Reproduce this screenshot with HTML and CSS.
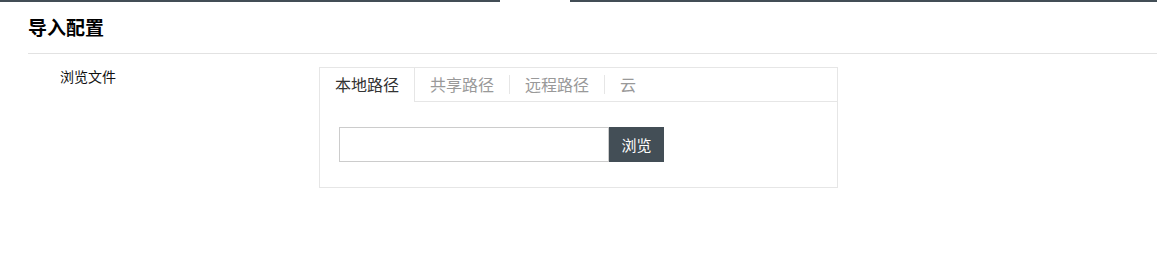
FILE: index.html
```html
<!DOCTYPE html>
<html lang="zh">
<head>
<meta charset="utf-8">
<title>导入配置</title>
<link rel="stylesheet" href="styles.css">
</head>
<body>
<div class="topbar"><span class="seg seg-a"></span><span class="seg-gap"></span><span class="seg seg-b"></span></div>
<div class="header"><h1 class="title">导入配置</h1></div>
<div class="form-row">
  <div class="label">浏览文件</div>
  <div class="panel">
    <div class="tabs">
      <div class="tab active">本地路径</div>
      <div class="tab">共享路径</div>
      <span class="sep"></span>
      <div class="tab">远程路径</div>
      <span class="sep"></span>
      <div class="tab">云</div>
    </div>
    <div class="panel-body">
      <input class="path-input" type="text">
      <button class="browse-btn" type="button">浏览</button>
    </div>
  </div>
</div>
</body>
</html>
```
FILE: styles.css
```css
html, body {
  margin: 0;
  padding: 0;
  background: #fff;
  font-family: "Noto Sans CJK SC", "Noto Sans", sans-serif;
  color: #222;
}
.topbar {
  display: flex;
  height: 2px;
}
.seg { background: #434e56; }
.seg-a { width: 500px; }
.seg-gap { width: 70px; }
.seg-b { flex: 1; }

.header {
  margin-left: 28px;
  padding: 13px 0 14px;
  border-bottom: 1px solid #e2e2e2;
}
.title {
  margin: 0;
  font-size: 19px;
  line-height: 24px;
  font-weight: bold;
  color: #000;
}
.form-row {
  display: flex;
  margin-top: 13px;
  padding-left: 60px;
}
.label {
  width: 259px;
  font-size: 14px;
  line-height: 19px;
  color: #111;
}
.panel {
  width: 517px;
  border: 1px solid #e6e6e6;
}
.tabs {
  display: flex;
  align-items: center;
  height: 33px;
  border-bottom: 1px solid #e6e6e6;
}
.tab {
  padding: 0 15px;
  font-size: 16px;
  line-height: 33px;
  color: #999;
}
.tab.active {
  align-self: stretch;
  height: 34px;
  margin-bottom: -1px;
  background: #fff;
  border-right: 1px solid #e6e6e6;
  color: #333;
}
.sep {
  width: 1px;
  height: 19px;
  background: #e6e6e6;
}
.panel-body {
  display: flex;
  padding: 25px 19px;
}
.path-input {
  box-sizing: border-box;
  width: 270px;
  height: 35px;
  margin: 0;
  border: 1px solid #cccccc;
  padding: 0 8px;
  outline: none;
  font-family: inherit;
}
.browse-btn {
  width: 55px;
  height: 35px;
  margin: 0;
  border: 0;
  background: #434e56;
  color: #fff;
  font-family: inherit;
  font-size: 15px;
  cursor: pointer;
}
```
